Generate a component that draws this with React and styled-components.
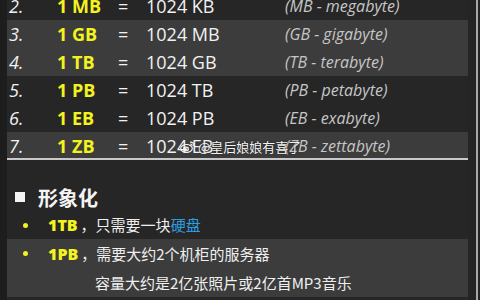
import React from "react";
import styled, { createGlobalStyle } from "styled-components";

const Global = createGlobalStyle`
  html, body { margin: 0; padding: 0; background: #262626; overflow: hidden; }
`;

const Page = styled.div`
  position: relative;
  width: 480px;
  height: 300px;
  overflow: hidden;
  display: flex;
  background: #262626;
  font-family: "Open Sans", "Noto Sans CJK SC", sans-serif;
`;

const LeftBand = styled.div`
  width: 7px;
  flex: none;
  background: #1d1d1d;
`;

const Main = styled.div`
  width: 461px;
  flex: none;
  display: flex;
  flex-direction: column;
`;

const RightRail = styled.div`
  flex: 1;
  display: flex;
  background: #232323;
`;

const RailGap = styled.div`
  width: 8px;
  background: #242424;
`;

const RailLine = styled.div`
  width: 2px;
  background: #a8a8a8;
`;

const Table = styled.div`
  margin-top: -8px;
  display: flex;
  flex-direction: column;
`;

const Row = styled.div`
  display: grid;
  grid-template-columns: 48px 61px 28px 139px 1fr;
  align-items: center;
  padding-left: 2px;
  height: ${(p) => (p.$last ? "26px" : "28px")};
  background: ${(p) => (p.$striped ? "#3c3c3c" : "transparent")};
  border-bottom: ${(p) => (p.$last ? "2px solid #c9c9c9" : "none")};
  color: #f2f2f2;
  font-size: 18px;
  line-height: 28px;
  white-space: nowrap;
`;

const Num = styled.span`
  font-style: italic;
`;

const Unit = styled.span`
  font-weight: 700;
  color: #f3f31e;
`;

const Eq = styled.span``;

const Value = styled.span``;

const Desc = styled.span`
  font-style: italic;
  font-size: 16px;
  color: #c6c6c6;
`;

const Heading = styled.div`
  margin-top: 23px;
  height: 28px;
  display: flex;
  align-items: center;
  gap: 13px;
  padding-left: 8px;
  color: #f4f4f4;
  font-family: "Noto Sans CJK SC", sans-serif;
  font-weight: 700;
  font-size: 20px;
`;

const Square = styled.span`
  width: 10px;
  height: 10px;
  background: #f4f4f4;
  flex: none;
`;

const BulletBlock = styled.div`
  background: ${(p) => (p.$striped ? "#3c3c3c" : "transparent")};
  margin-top: ${(p) => p.$top || 0}px;
`;

const BulletLine = styled.div`
  display: grid;
  grid-template-columns: 41px 1fr;
  align-items: center;
  height: ${(p) => p.$h || 28}px;
  color: #efefef;
  font-family: "Noto Sans CJK SC", sans-serif;
  font-size: 15px;
  white-space: nowrap;
`;

const Dot = styled.span`
  width: 5px;
  height: 5px;
  border-radius: 50%;
  background: #f3f31e;
  margin-left: 16px;
`;

const Indent = styled.span`
  grid-column: 2;
  padding-left: 47px;
`;

const Key = styled.span`
  font-family: "Open Sans", sans-serif;
  font-weight: 800;
  font-size: 16px;
  color: #f3f31e;
  margin-right: 3px;
`;

const Link = styled.span`
  color: #2a9ee2;
`;

const Watermark = styled.div`
  position: absolute;
  left: 180px;
  top: 139px;
  display: flex;
  align-items: center;
  gap: 2px;
  color: #f4f4f4;
  font-family: "Noto Sans CJK SC", sans-serif;
  font-size: 13px;
  line-height: 16px;
  text-shadow: 0 0 2px rgba(0, 0, 0, 0.6);
`;

const rows = [
  ["2.", "1 MB", "1024 KB", "(MB - megabyte)", false],
  ["3.", "1 GB", "1024 MB", "(GB - gigabyte)", true],
  ["4.", "1 TB", "1024 GB", "(TB - terabyte)", true],
  ["5.", "1 PB", "1024 TB", "(PB - petabyte)", false],
  ["6.", "1 EB", "1024 PB", "(EB - exabyte)", false],
  ["7.", "1 ZB", "1024 EB", "(ZB - zettabyte)", true],
];

function WeiboIcon() {
  return (
    <svg width="16" height="14" viewBox="0 0 16 14" fill="none" stroke="#f4f4f4" strokeWidth="1.2">
      <ellipse cx="6.5" cy="8.5" rx="5.8" ry="4" />
      <ellipse cx="6" cy="9" rx="2.4" ry="1.8" />
      <circle cx="5.6" cy="9.2" r="0.6" fill="#f4f4f4" />
      <path d="M10 2.2 C12.5 1.8 14.5 3.6 14 6.2" />
      <path d="M10.3 4.2 C11.6 4 12.4 5 12.1 6" />
    </svg>
  );
}

export default function App() {
  return (
    <>
      <Global />
      <Page>
        <LeftBand />
        <Main>
          <Table>
            {rows.map(([n, u, v, d, s], i) => (
              <Row key={n} $striped={s} $last={i === rows.length - 1}>
                <Num>{n}</Num>
                <Unit>{u}</Unit>
                <Eq>=</Eq>
                <Value>{v}</Value>
                <Desc>{d}</Desc>
              </Row>
            ))}
          </Table>
          <Heading>
            <Square />
            形象化
          </Heading>
          <BulletBlock>
            <BulletLine>
              <Dot />
              <span>
                <Key>1TB</Key>，只需要一块<Link>硬盘</Link>
              </span>
            </BulletLine>
          </BulletBlock>
          <BulletBlock $striped>
            <BulletLine $h={29}>
              <Dot />
              <span>
                <Key>1PB</Key>，需要大约2个机柜的服务器
              </span>
            </BulletLine>
            <BulletLine $h={29}>
              <Indent>容量大约是2亿张照片或2亿首MP3音乐</Indent>
            </BulletLine>
          </BulletBlock>
        </Main>
        <RightRail>
          <RailGap />
          <RailLine />
        </RightRail>
        <Watermark>
          <WeiboIcon />
          <span>@皇后娘娘有喜了</span>
        </Watermark>
      </Page>
    </>
  );
}
